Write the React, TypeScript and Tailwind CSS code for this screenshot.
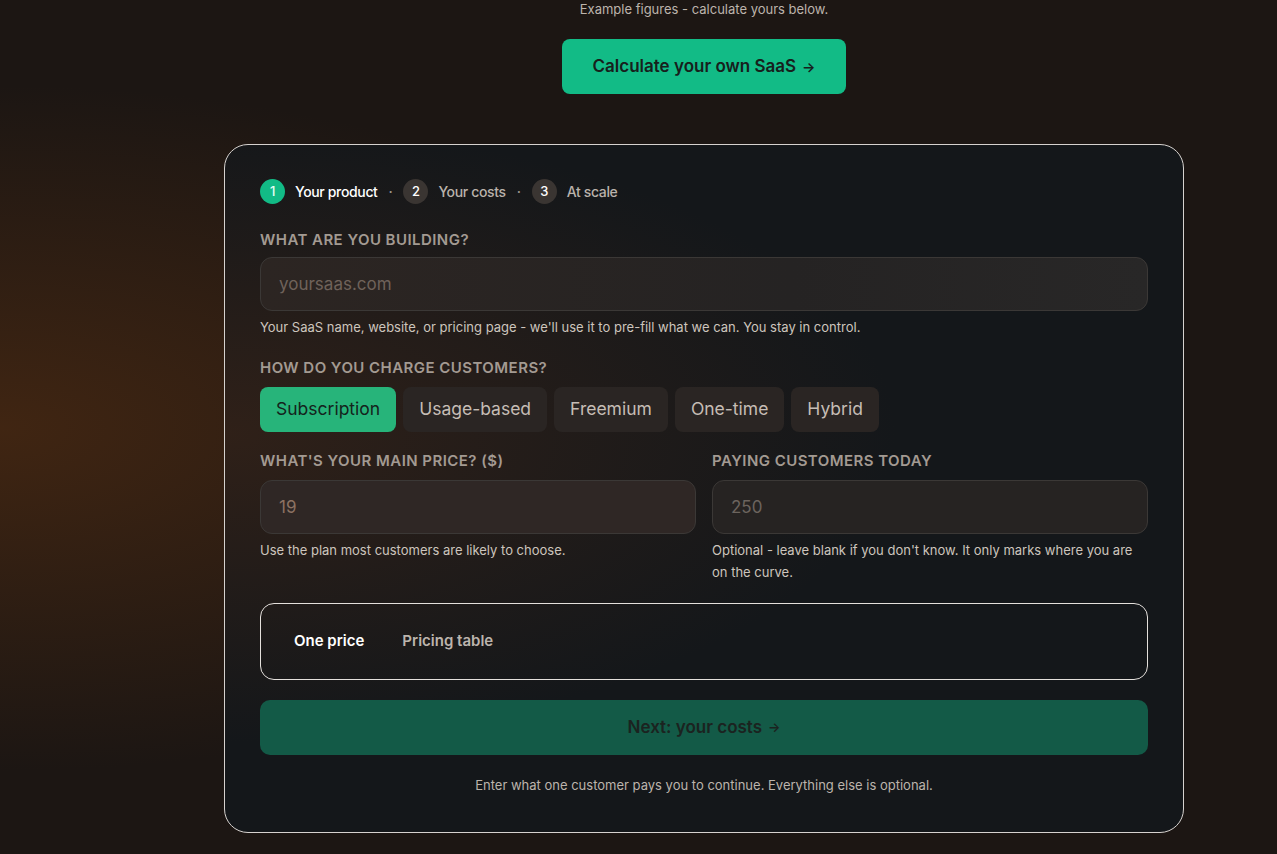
import { useState } from 'react';

const MODELS = ['Subscription', 'Usage-based', 'Freemium', 'One-time', 'Hybrid'];

const STEPS = [
  { n: 1, label: 'Your product' },
  { n: 2, label: 'Your costs' },
  { n: 3, label: 'At scale' },
];

export default function App() {
  const [model, setModel] = useState('Subscription');
  const [mode, setMode] = useState<'one' | 'table'>('one');

  return (
    <div className="min-h-[854px] w-full bg-[#1c1613] bg-[radial-gradient(ellipse_60%_40%_at_0%_50%,rgba(66,38,18,0.95),transparent_100%)] pb-6 pl-[131px] font-['Inter',sans-serif] text-white">
      <div className="flex flex-col items-center">
        <p className="-mt-[1px] text-[13px] leading-[20px] text-[#bdb4ac]">
          Example figures - calculate yours below.
        </p>

        <button className="mt-[20px] flex h-[55px] w-[284px] items-center justify-center rounded-lg bg-[#12bb86] text-[17px] font-semibold text-[#17201c]">
          Calculate your own SaaS <span className="ml-1.5 text-[14px]">→</span>
        </button>

        {/* Card */}
        <div className="mt-[50px] w-[960px] rounded-[24px] border border-[#d6d2cf] bg-[#14171a] bg-[radial-gradient(ellipse_70%_45%_at_0%_42%,rgba(52,34,24,0.85),transparent_100%)] px-[35px] pt-[34px] pb-[38px]">
          {/* Stepper */}
          <div className="flex items-center text-[14px] font-medium tracking-tight">
            {STEPS.map((s, i) => (
              <div key={s.n} className="flex items-center">
                {i > 0 && <span className="mx-[11px] text-[#9d958e]">·</span>}
                <span
                  className={`flex h-[25px] w-[25px] items-center justify-center rounded-full text-[13px] ${
                    s.n === 1 ? 'bg-[#12bb86] text-[#e8fff5]' : 'bg-[#3a3532] text-white'
                  }`}
                >
                  {s.n}
                </span>
                <span className={`ml-[10px] ${s.n === 1 ? 'text-white' : 'text-[#bab2ab]'}`}>{s.label}</span>
              </div>
            ))}
          </div>

          {/* Building */}
          <label className="mt-[26px] block text-[15px] font-semibold uppercase leading-[20px] tracking-[0.03em] text-[#a39a92]">
            What are you building?
          </label>
          <input
            placeholder="yoursaas.com"
            className="mt-[7px] h-[54px] w-full rounded-xl border border-[#3b3836] bg-[#2a2523] bg-[linear-gradient(90deg,#2c2522,#252323_60%,#282727)] px-[18px] text-[17px] text-white outline-none placeholder:text-[#6f625a]"
          />
          <p className="mt-[7px] text-[13px] leading-[18px] text-[#cdc5bd]">
            Your SaaS name, website, or pricing page - we'll use it to pre-fill what we can. You stay in control.
          </p>

          {/* Pricing model */}
          <label className="mt-[22px] block text-[15px] font-semibold uppercase leading-[20px] tracking-[0.03em] text-[#a39a92]">
            How do you charge customers?
          </label>
          <div className="mt-[9px] flex gap-[7px]">
            {MODELS.map(m => (
              <button
                key={m}
                onClick={() => setModel(m)}
                className={`h-[45px] rounded-lg px-[16px] text-[17.5px] ${
                  model === m ? 'bg-[#27b47a] text-[#14231c]' : 'bg-[#2a2523] text-[#c6bdb5]'
                }`}
              >
                {m}
              </button>
            ))}
          </div>

          {/* Price + customers */}
          <div className="mt-[19px] grid grid-cols-2 gap-4">
            <div>
              <label className="block text-[15px] font-semibold uppercase leading-[20px] tracking-[0.03em] text-[#a39a92]">
                What's your main price? ($)
              </label>
              <input
                defaultValue="19"
                className="mt-[9px] h-[54px] w-full rounded-xl border border-[#3b3836] bg-[#2f2725] px-[18px] text-[17px] text-[#8c7262] outline-none"
              />
              <p className="mt-[5px] text-[13px] leading-[22px] text-[#cdc5bd]">
                Use the plan most customers are likely to choose.
              </p>
            </div>
            <div>
              <label className="block text-[15px] font-semibold uppercase leading-[20px] tracking-[0.03em] text-[#a39a92]">
                Paying customers today
              </label>
              <input
                placeholder="250"
                className="mt-[9px] h-[54px] w-full rounded-xl border border-[#3b3836] bg-[#262322] px-[18px] text-[17px] text-white outline-none placeholder:text-[#6c645e]"
              />
              <p className="mt-[5px] text-[13px] leading-[22px] text-[#cdc5bd]">
                Optional - leave blank if you don't know. It only marks where you are on the curve.
              </p>
            </div>
          </div>

          {/* Price mode */}
          <div className="mt-[20px] flex h-[77px] items-center gap-[38px] rounded-[14px] border border-[#e4e0dc] px-[33px] text-[15px] font-semibold">
            <button onClick={() => setMode('one')} className={mode === 'one' ? 'text-white' : 'text-[#bcb4ad]'}>
              One price
            </button>
            <button onClick={() => setMode('table')} className={mode === 'table' ? 'text-white' : 'text-[#bcb4ad]'}>
              Pricing table
            </button>
          </div>

          <button className="mt-[20px] flex h-[55px] w-full items-center justify-center rounded-[10px] bg-[#135a47] text-[17px] font-semibold text-[#1b2320]">
            Next: your costs <span className="ml-1.5 text-[13px]">→</span>
          </button>

          <p className="mt-[21px] text-center text-[13px] leading-[18px] text-[#bcb4ac]">
            Enter what one customer pays you to continue. Everything else is optional.
          </p>
        </div>
      </div>
    </div>
  );
}
